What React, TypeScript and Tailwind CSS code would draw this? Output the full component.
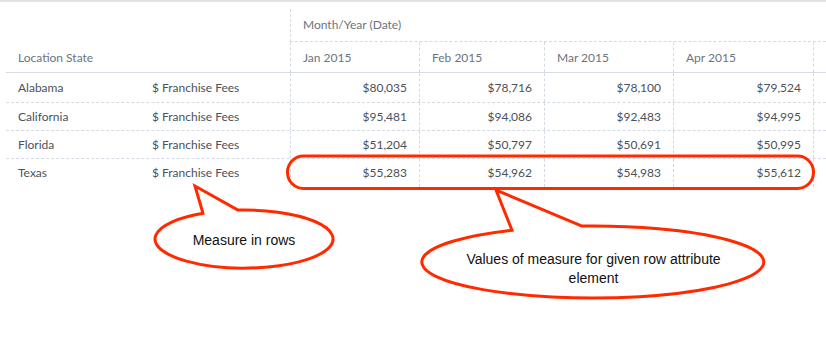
import React from "react";

const GRID = "grid grid-cols-[134px_150px_129px_125px_129px_140px_1fr]";
const months = ["Jan 2015", "Feb 2015", "Mar 2015", "Apr 2015"];
const rows: [string, string[]][] = [
  ["Alabama", ["$80,035", "$78,716", "$78,100", "$79,524"]],
  ["California", ["$95,481", "$94,086", "$92,483", "$94,995"]],
  ["Florida", ["$51,204", "$50,797", "$50,691", "$50,995"]],
  ["Texas", ["$55,283", "$54,962", "$54,983", "$55,612"]],
];

const dashL = "border-l border-dashed border-[#d3dae3]";

export default function App() {
  return (
    <div
      className="relative w-[826px] h-[341px] bg-white overflow-hidden text-[12px] font-normal text-[#4a525a]"
      style={{ fontFamily: "Lato, 'Open Sans', sans-serif" }}
    >
      <div className="h-[2px] bg-[#e2e2e2]" />
      <div className="ml-[6px] mt-[7px]">
        {/* header row 1 */}
        <div className={GRID}>
          <div className="col-span-2" />
          <div
            className={`col-span-5 h-[33px] ${dashL} border-b border-b-dashed border-b-[#d3dae3] pl-3 flex items-center text-[#6b7480]`}
          >
            Month/Year (Date)
          </div>
        </div>
        {/* header row 2 */}
        <div className={`${GRID} h-[31px] border-b border-[#d5dce4]`}>
          <div className="col-span-2 pl-3 pt-[2px] flex items-center text-[#6b7480]">Location State</div>
          {months.map((m) => (
            <div key={m} className={`${dashL} pl-3 pt-[2px] flex items-center text-[#6b7480]`}>
              {m}
            </div>
          ))}
          <div className={dashL} />
        </div>
        {/* body */}
        {rows.map(([state, vals], i) => (
          <div
            key={state}
            className={`${GRID} ${i === 0 ? "h-[30px]" : "h-[28px]"} ${
              i < rows.length - 1 ? "border-b border-dashed border-[#d3dae3]" : ""
            }`}
          >
            <div className="pl-3 flex items-center">{state}</div>
            <div className="pl-3 flex items-center">$ Franchise Fees</div>
            {vals.map((v, j) => (
              <div key={j} className={`${dashL} pr-3 flex items-center justify-end`}>
                {v}
              </div>
            ))}
            <div className={dashL} />
          </div>
        ))}
      </div>

      {/* annotations */}
      <svg
        className="absolute inset-0 pointer-events-none"
        width="826"
        height="341"
        viewBox="0 0 826 341"
      >
        <rect
          x="287.5"
          y="156"
          width="526"
          height="32.5"
          rx="16"
          ry="16"
          fill="none"
          stroke="#ff2a00"
          strokeWidth="3"
        />
        <path
          d="M 238 210.1 L 195 186 L 203 213.3 A 89 29 0 1 0 238 210.1 Z"
          fill="white"
          stroke="#ff2a00"
          strokeWidth="3"
          strokeLinejoin="miter"
        />
        <path
          d="M 582 226.1 L 496 190 L 512 230.3 A 171 36 0 1 0 582 226.1 Z"
          fill="white"
          stroke="#ff2a00"
          strokeWidth="3"
          strokeLinejoin="miter"
        />
      </svg>
      <div
        className="absolute left-[155px] top-[231px] w-[178px] text-center text-[14px] font-normal leading-[19px] text-[#111]"
        style={{ fontFamily: "'Liberation Sans', Arial, sans-serif" }}
      >
        Measure in rows
      </div>
      <div
        className="absolute left-[422px] top-[250px] w-[343px] text-center text-[14px] font-normal leading-[19px] text-[#111]"
        style={{ fontFamily: "'Liberation Sans', Arial, sans-serif" }}
      >
        Values of measure for given row attribute
        <br />
        element
      </div>
    </div>
  );
}
